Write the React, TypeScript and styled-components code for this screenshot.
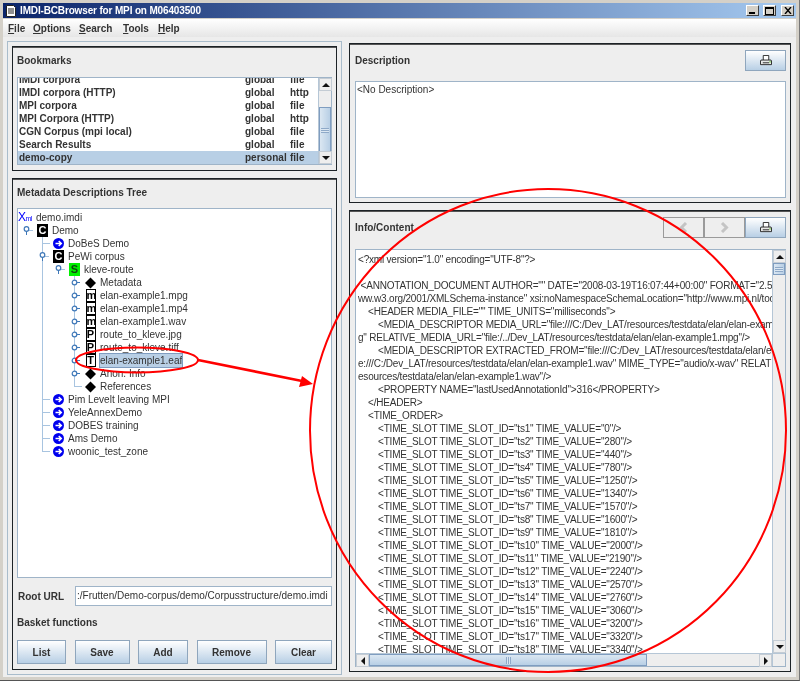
import React from 'react';
import styled, { createGlobalStyle } from 'styled-components';

const GlobalStyle = createGlobalStyle`
	html, body {
		margin: 0;
		padding: 0;
		background: #d4d0c8;
	}
	* {
		box-sizing: border-box;
	}
`;

const Frame = styled.div`
	position: relative;
	width: 800px;
	height: 681px;
	display: flex;
	flex-direction: column;
	padding: 3px 3px 3px 3px;
	background: #d4d0c8;
	border-right: 1px solid #777;
	border-bottom: 1px solid #555;
	font-family: 'Liberation Sans', Arial, sans-serif;
	font-size: 10px;
	color: #333;
	overflow: hidden;
	filter: blur(0.3px);
`;

const TitleBar = styled.div`
	flex: none;
	height: 15px;
	display: flex;
	align-items: center;
	gap: 4px;
	padding: 0 2px 0 3px;
	margin-bottom: 1px;
	background: linear-gradient(90deg, #0a246a, #a6caf0);
	color: #fff;
	font-weight: bold;
`;

const TitleText = styled.div`
	flex: 1;
	letter-spacing: -0.15px;
`;

const WinButton = styled.div<{ $gap?: number }>`
	width: 13px;
	height: 11px;
	margin-left: ${p => p.$gap ?? 0}px;
	display: flex;
	align-items: center;
	justify-content: center;
	background: #d4d0c8;
	border: 1px solid;
	border-color: #fff #404040 #404040 #fff;
`;

const MenuBar = styled.div`
	flex: none;
	height: 18px;
	display: flex;
	align-items: center;
	padding: 0 0 0 5px;
	background: linear-gradient(#ffffff, #e6e6e6);
	font-weight: bold;
`;

const MenuItem = styled.div<{ $w: number }>`
	width: ${p => p.$w}px;
`;

const Content = styled.div`
	flex: 1;
	min-height: 0;
	display: flex;
	padding: 4px 5px 2px 4px;
	background: #eeeeee;
`;

const LeftPane = styled.div`
	flex: none;
	width: 335px;
	display: flex;
	flex-direction: column;
	padding: 4px;
	border: 1px solid #a9bccb;
`;

const RightPane = styled.div`
	flex: 1;
	min-width: 0;
	display: flex;
	flex-direction: column;
	margin: 2px 0 3px 0;
`;

const VSplit = styled.div`
	flex: none;
	width: 7px;
	background: radial-gradient(#b5b5b5 0.6px, transparent 0.7px) 0 0 / 2px 2px;
`;

const HSplit = styled.div`
	flex: none;
	height: 7px;
	background: radial-gradient(#c4c4c4 0.6px, transparent 0.7px) 0 1px / 2px 2px;
`;

const Panel = styled.section<{ $h?: number }>`
	${p => (p.$h ? `flex: none; height: ${p.$h}px;` : 'flex: 1; min-height: 0;')}
	display: flex;
	flex-direction: column;
	padding: 0 4px 5px 4px;
	background: #eeeeee;
	border: 1px solid #1c2226;
	box-shadow: inset 0 1px 0 #555;
`;

const RightPanel = styled(Panel)`
	padding: 6px 4px 4px 5px;
`;

const PanelTitle = styled.div`
	flex: none;
	display: flex;
	align-items: center;
	font-weight: bold;
	height: 26px;
	margin-bottom: 4px;
`;

const TreeTitle = styled(PanelTitle)`
	margin-bottom: 3px;
`;

const PanelHead = styled.div<{ $mb: number }>`
	flex: none;
	height: 21px;
	display: flex;
	align-items: center;
	justify-content: space-between;
	margin-bottom: ${p => p.$mb}px;
	font-weight: bold;
`;

const ToolGroup = styled.div`
	display: flex;
`;

const ToolButton = styled.div<{ $off?: boolean }>`
	width: 41px;
	height: 21px;
	display: flex;
	align-items: center;
	justify-content: center;
	border: 1px solid ${p => (p.$off ? '#9a9a9a' : '#8fa6bd')};
	background: ${p => (p.$off ? '#eeeeee' : 'linear-gradient(#ffffff, #b8cfe5)')};
`;

const ListBox = styled.div`
	flex: 1;
	min-height: 0;
	display: flex;
	border: 1px solid #9fb4c8;
	background: #fff;
`;

const BookmarkRows = styled.div`
	flex: 1;
	min-width: 0;
	display: flex;
	flex-direction: column;
	justify-content: flex-end;
	overflow: hidden;
	font-weight: bold;
`;

const BookmarkRow = styled.div<{ $selected?: boolean }>`
	flex: none;
	height: 13px;
	line-height: 13px;
	display: grid;
	grid-template-columns: 226px 45px 1fr;
	padding-left: 1px;
	background: ${p => (p.$selected ? '#b8cfe5' : 'transparent')};
`;

const VBar = styled.div`
	flex: none;
	width: 13px;
	display: flex;
	flex-direction: column;
	background: #eeeeee;
	border-left: 1px solid #b5c6d6;
`;

const ArrowBtn = styled.div`
	flex: none;
	width: 13px;
	height: 13px;
	display: flex;
	align-items: center;
	justify-content: center;
	background: #eeeeee;
	border: 1px solid #c4ccd4;
`;

const VTrack = styled.div<{ $top: number }>`
	flex: 1;
	min-height: 0;
	padding-top: ${p => p.$top}px;
`;

const VThumb = styled.div<{ $size: number }>`
	height: ${p => p.$size}px;
	display: flex;
	align-items: center;
	justify-content: center;
	background: linear-gradient(90deg, #dbe7f2, #b8cfe5);
	border: 1px solid #7f9dc0;
	&::after {
		content: '';
		width: 8px;
		height: 5px;
		background: repeating-linear-gradient(#8ea9c8 0 1px, #dbe7f2 1px 2px);
	}
`;

const HBar = styled.div`
	flex: none;
	height: 13px;
	display: flex;
	background: #eeeeee;
	border-top: 1px solid #b5c6d6;
`;

const HTrack = styled.div`
	flex: 1;
	min-width: 0;
`;

const HThumb = styled.div<{ $size: number }>`
	width: ${p => p.$size}px;
	height: 100%;
	display: flex;
	align-items: center;
	justify-content: center;
	background: linear-gradient(#dbe7f2, #b8cfe5);
	border: 1px solid #7f9dc0;
	&::after {
		content: '';
		width: 5px;
		height: 7px;
		background: repeating-linear-gradient(90deg, #8ea9c8 0 1px, #dbe7f2 1px 2px);
	}
`;

const Corner = styled.div`
	flex: none;
	width: 13px;
	background: #eeeeee;
	border-left: 1px solid #b5c6d6;
`;

const TreeBox = styled.div`
	flex: 1;
	min-height: 0;
	padding-top: 2px;
	background: #fff;
	border: 1px solid #9fb4c8;
	overflow: hidden;
`;

const TreeRow = styled.div`
	height: 13px;
	display: flex;
	align-items: center;
	white-space: nowrap;
`;

const RootRow = styled(TreeRow)`
	gap: 2px;
`;

const NodeIcon = styled.div`
	flex: none;
	width: 11px;
	height: 13px;
	margin: 0 4px 0 3px;
	display: flex;
	align-items: center;
	justify-content: center;
`;

const LetterIcon = styled.span<{ $bg: string; $fg: string }>`
	width: 11px;
	height: 13px;
	display: block;
	text-align: center;
	line-height: 13px;
	font-size: 11px;
	font-weight: bold;
	background: ${p => p.$bg};
	color: ${p => p.$fg};
`;

const MediaIcon = styled.span`
	width: 10px;
	height: 13px;
	display: block;
	text-align: center;
	line-height: 11px;
	font-size: 11px;
	font-weight: bold;
	color: #000;
	background: #fff;
	border: 1px solid #000;
	border-width: 1px 1.5px;
`;

const XmlIcon = styled.span`
	flex: none;
	width: 16px;
	color: #0000ff;
	font-size: 12px;
	line-height: 13px;
	letter-spacing: -0.5px;
	small {
		font-size: 7px;
	}
`;

const NodeLabel = styled.span<{ $selected?: boolean }>`
	line-height: 13px;
	${p =>
		p.$selected &&
		`
		background: #b8cfe5;
		outline: 1px solid #7f9dc0;
	`}
`;

const UrlRow = styled.div`
	flex: none;
	height: 20px;
	margin-top: 8px;
	display: flex;
	align-items: center;
	font-weight: bold;
`;

const UrlLabel = styled.div`
	flex: none;
	width: 58px;
	padding-left: 1px;
`;

const UrlField = styled.div`
	flex: 1;
	min-width: 0;
	height: 20px;
	line-height: 18px;
	padding-left: 1px;
	background: #fff;
	border: 1px solid #9fb4c8;
	font-weight: normal;
	white-space: nowrap;
	overflow: hidden;
`;

const BasketTitle = styled.div`
	flex: none;
	height: 16px;
	line-height: 16px;
	margin: 9px 0;
	font-weight: bold;
`;

const ButtonRow = styled.div`
	flex: none;
	display: flex;
	justify-content: space-between;
`;

const BasketButton = styled.div<{ $w: number }>`
	width: ${p => p.$w}px;
	height: 24px;
	display: flex;
	align-items: center;
	justify-content: center;
	font-weight: bold;
	border: 1px solid #8fa6bd;
	background: linear-gradient(#ffffff, #b8cfe5);
`;

const DescBox = styled.div`
	flex: 1;
	min-height: 0;
	padding: 1px;
	line-height: 13px;
	background: #fff;
	border: 1px solid #9fb4c8;
`;

const ContentBox = styled.div`
	flex: 1;
	min-height: 0;
	display: flex;
	flex-direction: column;
	border: 1px solid #9fb4c8;
`;

const ContentMain = styled.div`
	flex: 1;
	min-height: 0;
	display: flex;
`;

const XmlText = styled.div`
	flex: 1;
	min-width: 0;
	padding: 3px 0 0 2px;
	background: #fff;
	overflow: hidden;
`;

const XmlLine = styled.div<{ $indent?: number }>`
	height: 13px;
	line-height: 13px;
	white-space: pre;
	letter-spacing: -0.2px;
	padding-left: ${p => (p.$indent ?? 0) * 10}px;
`;

const Overlay = styled.svg`
	position: absolute;
	left: 0;
	top: 0;
	pointer-events: none;
`;

type BranchKind = 'blank' | 'line' | 'tee' | 'end' | 'open' | 'openLine' | 'closed';

function Branch({ kind }: { kind: BranchKind }) {
	const c = '#a8c4e0';
	const h = '#3f78b8';
	const hasVertical = kind === 'line' || kind === 'tee' || kind === 'openLine' || kind === 'closed';
	return (
		<svg width="16" height="13" style={{ flex: 'none' }}>
			{hasVertical && <line x1="8.5" y1="0" x2="8.5" y2="13" stroke={c} />}
			{kind === 'end' && <line x1="8.5" y1="0" x2="8.5" y2="6.5" stroke={c} />}
			{(kind === 'tee' || kind === 'end') && <line x1="8" y1="6.5" x2="16" y2="6.5" stroke={c} />}
			{(kind === 'open' || kind === 'openLine') && (
				<>
					<line x1="8.5" y1="6" x2="8.5" y2="11" stroke={h} />
					<line x1="11" y1="6.5" x2="15" y2="6.5" stroke={c} />
					<circle cx="8.5" cy="5" r="2.3" fill="#fff" stroke={h} strokeWidth="1.2" />
				</>
			)}
			{kind === 'closed' && (
				<>
					<line x1="9" y1="6.5" x2="14" y2="6.5" stroke={h} />
					<circle cx="8.5" cy="6.5" r="2.3" fill="#fff" stroke={h} strokeWidth="1.2" />
				</>
			)}
		</svg>
	);
}

function LinkIcon() {
	return (
		<svg width="11" height="11" viewBox="0 0 11 11">
			<circle cx="5.5" cy="5.5" r="5.5" fill="#0000ee" />
			<path d="M2.5 5.5H8M5.7 3l2.6 2.5L5.7 8" fill="none" stroke="#fff" strokeWidth="1.5" />
		</svg>
	);
}

function DiamondIcon() {
	return (
		<svg width="12" height="12" viewBox="0 0 12 12">
			<polygon points="6,0 12,6 6,12 0,6" fill="#000" />
		</svg>
	);
}

function PrintIcon() {
	return (
		<svg width="12" height="11" viewBox="0 0 13 12">
			<path d="M3.5 5.5V.5h6v5" fill="#fff" stroke="#222" />
			<path d="M1 5.5h11l.5 1v4H.5v-4z" fill="#e8e8e8" stroke="#222" />
			<path d="M3 8.5h7" stroke="#222" />
			<rect x="10" y="7" width="2" height="1" fill="#6c3" />
		</svg>
	);
}

function Chevron({ dir }: { dir: 'left' | 'right' }) {
	return (
		<svg width="9" height="11" viewBox="0 0 9 11">
			<path
				d={dir === 'left' ? 'M7 1L2.5 5.5 7 10' : 'M2 1l4.5 4.5L2 10'}
				fill="none"
				stroke="#c4c4c4"
				strokeWidth="3"
			/>
		</svg>
	);
}

function Tri({ dir }: { dir: 'up' | 'down' | 'left' | 'right' }) {
	const pts = {
		up: '4,1 8,5 0,5',
		down: '0,1 8,1 4,5',
		left: '5,0 5,8 1,4',
		right: '1,0 1,8 5,4',
	}[dir];
	const vertical = dir === 'up' || dir === 'down';
	return (
		<svg width={vertical ? 8 : 6} height={vertical ? 6 : 8}>
			<polygon points={pts} fill="#111" />
		</svg>
	);
}

const bookmarks = [
	['IMDI corpora', 'global', 'file'],
	['IMDI corpora (HTTP)', 'global', 'http'],
	['MPI corpora', 'global', 'file'],
	['MPI Corpora (HTTP)', 'global', 'http'],
	['CGN Corpus (mpi local)', 'global', 'file'],
	['Search Results', 'global', 'file'],
	['demo-copy', 'personal', 'file'],
];

type IconKind = 'corpus' | 'session' | 'link' | 'diamond' | 'm' | 'P' | 'T';

const treeRows: { label: string; icon: IconKind; branches: BranchKind[]; selected?: boolean }[] = [
	{ label: 'Demo', icon: 'corpus', branches: ['open'] },
	{ label: 'DoBeS Demo', icon: 'link', branches: ['blank', 'tee'] },
	{ label: 'PeWi corpus', icon: 'corpus', branches: ['blank', 'openLine'] },
	{ label: 'kleve-route', icon: 'session', branches: ['blank', 'line', 'open'] },
	{ label: 'Metadata', icon: 'diamond', branches: ['blank', 'line', 'blank', 'closed'] },
	{ label: 'elan-example1.mpg', icon: 'm', branches: ['blank', 'line', 'blank', 'closed'] },
	{ label: 'elan-example1.mp4', icon: 'm', branches: ['blank', 'line', 'blank', 'closed'] },
	{ label: 'elan-example1.wav', icon: 'm', branches: ['blank', 'line', 'blank', 'closed'] },
	{ label: 'route_to_kleve.jpg', icon: 'P', branches: ['blank', 'line', 'blank', 'closed'] },
	{ label: 'route_to_kleve.tiff', icon: 'P', branches: ['blank', 'line', 'blank', 'closed'] },
	{ label: 'elan-example1.eaf', icon: 'T', branches: ['blank', 'line', 'blank', 'closed'], selected: true },
	{ label: 'Anon. Info', icon: 'diamond', branches: ['blank', 'line', 'blank', 'closed'] },
	{ label: 'References', icon: 'diamond', branches: ['blank', 'line', 'blank', 'end'] },
	{ label: 'Pim Levelt leaving MPI', icon: 'link', branches: ['blank', 'tee'] },
	{ label: 'YeleAnnexDemo', icon: 'link', branches: ['blank', 'tee'] },
	{ label: 'DOBES training', icon: 'link', branches: ['blank', 'tee'] },
	{ label: 'Ams Demo', icon: 'link', branches: ['blank', 'tee'] },
	{ label: 'woonic_test_zone', icon: 'link', branches: ['blank', 'end'] },
];

function renderIcon(icon: IconKind) {
	switch (icon) {
		case 'corpus':
			return <LetterIcon $bg="#000" $fg="#fff">C</LetterIcon>;
		case 'session':
			return <LetterIcon $bg="#00f000" $fg="#114411">S</LetterIcon>;
		case 'link':
			return <LinkIcon />;
		case 'diamond':
			return <DiamondIcon />;
		default:
			return <MediaIcon>{icon}</MediaIcon>;
	}
}

const timeValues = [0, 280, 440, 780, 1250, 1340, 1570, 1600, 1810, 2000, 2190, 2240, 2570, 2760, 3060, 3200, 3320, 3340];

const xmlLines: { text: string; indent?: number }[] = [
	{ text: '<?xml version="1.0" encoding="UTF-8"?>' },
	{ text: ' ' },
	{ text: ' <ANNOTATION_DOCUMENT AUTHOR="" DATE="2008-03-19T16:07:44+00:00" FORMAT="2.5" VERSION="2.5" xmlns:xsi="http://' },
	{ text: 'ww.w3.org/2001/XMLSchema-instance" xsi:noNamespaceSchemaLocation="http://www.mpi.nl/tools/elan/EAFv2.5.xsd">' },
	{ text: '<HEADER MEDIA_FILE="" TIME_UNITS="milliseconds">', indent: 1 },
	{ text: '<MEDIA_DESCRIPTOR MEDIA_URL="file:///C:/Dev_LAT/resources/testdata/elan/elan-example1.mp', indent: 2 },
	{ text: 'g" RELATIVE_MEDIA_URL="file:/../Dev_LAT/resources/testdata/elan/elan-example1.mpg"/>' },
	{ text: '<MEDIA_DESCRIPTOR EXTRACTED_FROM="file:///C:/Dev_LAT/resources/testdata/elan/elan-example', indent: 2 },
	{ text: 'e:///C:/Dev_LAT/resources/testdata/elan/elan-example1.wav" MIME_TYPE="audio/x-wav" RELATIVE_MEDIA_URL="f' },
	{ text: 'esources/testdata/elan/elan-example1.wav"/>' },
	{ text: '<PROPERTY NAME="lastUsedAnnotationId">316</PROPERTY>', indent: 2 },
	{ text: '</HEADER>', indent: 1 },
	{ text: '<TIME_ORDER>', indent: 1 },
	...timeValues.map((v, i) => ({
		text: `<TIME_SLOT TIME_SLOT_ID="ts${i + 1}" TIME_VALUE="${v}"/>`,
		indent: 2,
	})),
];

export default function App() {
	return (
		<>
			<GlobalStyle />
			<Frame>
				<TitleBar>
					<svg width="10" height="12" viewBox="0 0 10 12">
						<path d="M.5.5h7l2 2v9H.5z" fill="#fff" stroke="#222" />
						<path d="M2 4h6M2 6h6M2 8h6" stroke="#222" />
					</svg>
					<TitleText>IMDI-BCBrowser for MPI on M06403500</TitleText>
					<WinButton>
						<svg width="7" height="7">
							<rect x="0" y="5" width="6" height="2" fill="#000" />
						</svg>
					</WinButton>
					<WinButton>
						<svg width="9" height="8">
							<rect x="0.5" y="0.5" width="8" height="7" fill="none" stroke="#000" />
							<rect x="0" y="0" width="9" height="2" fill="#000" />
						</svg>
					</WinButton>
					<WinButton $gap={1}>
						<svg width="8" height="7">
							<path d="M1 0l6 7M7 0L1 7" stroke="#000" strokeWidth="1.4" />
						</svg>
					</WinButton>
				</TitleBar>
				<MenuBar>
					<MenuItem $w={25}><u>F</u>ile</MenuItem>
					<MenuItem $w={46}><u>O</u>ptions</MenuItem>
					<MenuItem $w={44}><u>S</u>earch</MenuItem>
					<MenuItem $w={35}><u>T</u>ools</MenuItem>
					<MenuItem $w={30}><u>H</u>elp</MenuItem>
				</MenuBar>
				<Content>
					<LeftPane>
						<Panel $h={125}>
							<PanelTitle>Bookmarks</PanelTitle>
							<ListBox>
								<BookmarkRows>
									{bookmarks.map(([name, scope, type]) => (
										<BookmarkRow key={name} $selected={name === 'demo-copy'}>
											<span>{name}</span>
											<span>{scope}</span>
											<span>{type}</span>
										</BookmarkRow>
									))}
								</BookmarkRows>
								<VBar>
									<ArrowBtn>
										<Tri dir="up" />
									</ArrowBtn>
									<VTrack $top={16}>
										<VThumb $size={47} />
									</VTrack>
									<ArrowBtn>
										<Tri dir="down" />
									</ArrowBtn>
								</VBar>
							</ListBox>
						</Panel>
						<HSplit />
						<Panel>
							<TreeTitle>Metadata Descriptions Tree</TreeTitle>
							<TreeBox>
								<RootRow>
									<XmlIcon>
										X<small>ml</small>
									</XmlIcon>
									<NodeLabel>demo.imdi</NodeLabel>
								</RootRow>
								{treeRows.map(row => (
									<TreeRow key={row.label}>
										{row.branches.map((b, i) => (
											<Branch key={i} kind={b} />
										))}
										<NodeIcon>{renderIcon(row.icon)}</NodeIcon>
										<NodeLabel $selected={row.selected}>{row.label}</NodeLabel>
									</TreeRow>
								))}
							</TreeBox>
							<UrlRow>
								<UrlLabel>Root URL</UrlLabel>
								<UrlField>:/Frutten/Demo-corpus/demo/Corpusstructure/demo.imdi</UrlField>
							</UrlRow>
							<BasketTitle>Basket functions</BasketTitle>
							<ButtonRow>
								<BasketButton $w={49}>List</BasketButton>
								<BasketButton $w={55}>Save</BasketButton>
								<BasketButton $w={50}>Add</BasketButton>
								<BasketButton $w={70}>Remove</BasketButton>
								<BasketButton $w={57}>Clear</BasketButton>
							</ButtonRow>
						</Panel>
					</LeftPane>
					<VSplit />
					<RightPane>
						<RightPanel $h={160}>
							<PanelHead $mb={10}>
								<span>Description</span>
								<ToolButton>
									<PrintIcon />
								</ToolButton>
							</PanelHead>
							<DescBox>&lt;No Description&gt;</DescBox>
						</RightPanel>
						<HSplit />
						<RightPanel>
							<PanelHead $mb={11}>
								<span>Info/Content</span>
								<ToolGroup>
									<ToolButton $off>
										<Chevron dir="left" />
									</ToolButton>
									<ToolButton $off>
										<Chevron dir="right" />
									</ToolButton>
									<ToolButton>
										<PrintIcon />
									</ToolButton>
								</ToolGroup>
							</PanelHead>
							<ContentBox>
								<ContentMain>
									<XmlText>
										{xmlLines.map((l, i) => (
											<XmlLine key={i} $indent={l.indent}>
												{l.text}
											</XmlLine>
										))}
									</XmlText>
									<VBar>
										<ArrowBtn>
											<Tri dir="up" />
										</ArrowBtn>
										<VTrack $top={0}>
											<VThumb $size={12} />
										</VTrack>
										<ArrowBtn>
											<Tri dir="down" />
										</ArrowBtn>
									</VBar>
								</ContentMain>
								<HBar>
									<ArrowBtn>
										<Tri dir="left" />
									</ArrowBtn>
									<HTrack>
										<HThumb $size={278} />
									</HTrack>
									<ArrowBtn>
										<Tri dir="right" />
									</ArrowBtn>
									<Corner />
								</HBar>
							</ContentBox>
						</RightPanel>
					</RightPane>
				</Content>
				<Overlay width="800" height="681" viewBox="0 0 800 681">
					<ellipse cx="548" cy="430.5" rx="238" ry="241.5" fill="none" stroke="#ff0000" strokeWidth="2" />
					<ellipse cx="137" cy="360" rx="61" ry="12.5" fill="none" stroke="#ff0000" strokeWidth="2" />
					<line x1="198" y1="360" x2="302" y2="381" stroke="#ff0000" strokeWidth="2.6" />
					<polygon points="313,384 299,387 302,376" fill="#ff0000" />
				</Overlay>
			</Frame>
		</>
	);
}
